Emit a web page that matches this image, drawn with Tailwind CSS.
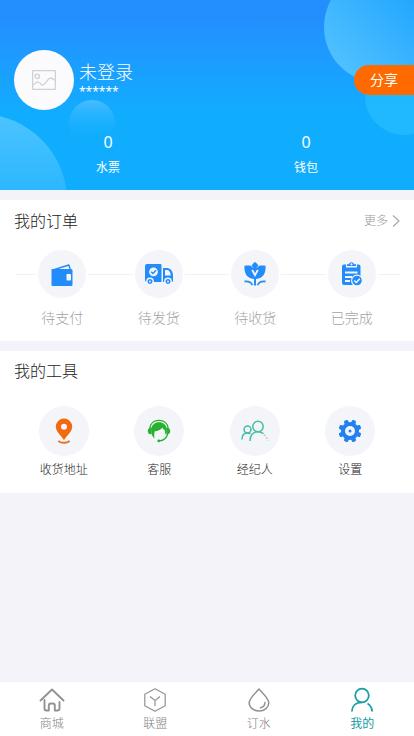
<!DOCTYPE html>
<html lang="zh-CN">
<head>
<meta charset="utf-8">
<meta name="viewport" content="width=device-width, initial-scale=1">
<title>我的</title>
<script src="https://cdn.jsdelivr.net/npm/@tailwindcss/browser@4"></script>
</head>
<body class="min-h-screen flex flex-col bg-[#f4f3fa] text-[#222] font-light font-['Noto_Sans','Noto_Sans_CJK_SC',sans-serif]">
<header class="relative overflow-hidden bg-linear-to-b from-[#238fff] from-10% to-[#10adff] to-60% text-white pt-[50px] pb-1.5">
  <svg class="absolute right-0 top-0" width="92" height="140" viewBox="0 0 92 140" aria-hidden="true">
    <defs>
      <linearGradient id="ga" x1="0" y1="1" x2="0.8" y2="0.2"><stop offset="0.1" stop-color="#54c3ff"/><stop offset="1" stop-color="#22a6ff"/></linearGradient>
    </defs>
    <circle cx="82" cy="96" r="39" fill="#25bcfe" fill-opacity=".75"/>
    <circle cx="58" cy="27" r="56" fill="url(#ga)"/>
  </svg>
  <svg class="absolute left-0 bottom-0" width="120" height="90" viewBox="0 0 120 90" aria-hidden="true">
    <defs>
      <linearGradient id="gb" x1="0" y1="0" x2="0" y2="1"><stop offset="0" stop-color="#48bdff"/><stop offset=".9" stop-color="#10adff" stop-opacity="0"/></linearGradient>
      <linearGradient id="gc" x1="0" y1="0" x2="0" y2="1"><stop offset="0" stop-color="#4cc4ff"/><stop offset=".5" stop-color="#27b5ff"/></linearGradient>
    </defs>
    <circle cx="-20" cy="101" r="87" fill="url(#gc)"/>
    <circle cx="92" cy="23" r="23" fill="url(#gb)"/>
  </svg>
  <div class="relative flex items-center pl-3.5">
    <div class="size-15 rounded-full bg-[#fbfbfe] flex items-center justify-center">
      <svg width="24" height="20" viewBox="0 0 24 20" fill="none" stroke="#d0d0d6" stroke-width="1.3" role="img" aria-label="头像"><rect x=".6" y=".6" width="22.8" height="18.8" rx="1"/><circle cx="5.300" cy="6.300" r="2.200"/><path d="M1 15l4-3 3 1 2 2.200 2-.7 5-6 2.500-.5 4 2.700"/></svg>
    </div>
    <div class="ml-[5px]">
      <h1 class="text-lg leading-6">未登录</h1>
      <p class="text-xs leading-4 font-normal">******</p>
    </div>
    <button type="button" class="ml-auto w-[60px] h-[30px] rounded-l-full bg-[#ff6a00] text-sm font-normal">分享</button>
  </div>
  <div class="relative grid grid-cols-2 px-[9px] pt-[22px] text-center font-normal">
    <a href="#"><span class="block text-base leading-5">0</span><span class="block text-xs leading-4 mt-2 pb-2">水票</span></a>
    <a href="#"><span class="block text-base leading-5">0</span><span class="block text-xs leading-4 mt-2 pb-2">钱包</span></a>
  </div>
</header>
<main class="grow">
  <section class="mt-2.5 bg-white px-3.5 pt-2.5 pb-[13px]">
    <div class="flex items-center justify-between h-[22px]">
      <h2 class="text-base">我的订单</h2>
      <a href="#" class="flex items-center gap-1 text-xs text-[#999]">更多
        <svg width="8" height="14" viewBox="0 0 8 14" fill="none" stroke="#aaa" stroke-width="1.2" aria-hidden="true"><path d="M1 1.500L7 7l-6 5.500"/></svg></a>
    </div>
    <div class="relative mt-[18px]">
      <div class="absolute left-0.5 right-0 top-6 h-px bg-[#f1f1f3]"></div>
      <ul class="relative grid grid-cols-4 text-center text-sm leading-5 text-[#a3a3a3]">
        <li><a href="#"><span class="mx-auto mb-2.5 size-12 rounded-full bg-[#f4f5f9] ring-2 ring-white flex items-center justify-center">
          <svg width="24" height="24" viewBox="0 0 24 24" fill="#228cfa" aria-hidden="true"><path d="M2 7.500L18.500 2.300a1 1 0 0 1 1.200.6L20.800 7h-1.400L18.300 4 7 7.500z"/><path d="M3 7h18a1.500 1.500 0 0 1 1.500 1.500V23a1 1 0 0 1-1 1H2.500a1 1 0 0 1-1-1V7z"/><rect x="16.500" y="12" width="4.500" height="6.500" rx=".8" fill="#f4f5f9"/></svg></span>待支付</a></li>
        <li><a href="#"><span class="mx-auto mb-2.5 size-12 rounded-full bg-[#f4f5f9] ring-2 ring-white flex items-center justify-center">
          <svg width="30" height="24" viewBox="0 0 30 24" aria-hidden="true"><path fill="#228cfa" d="M3 2h13.500a1 1 0 0 1 1 1v17H3a2 2 0 0 1-2-2V4a2 2 0 0 1 2-2zM19 6h4c4 0 6 4 6 8v5a1 1 0 0 1-1 1h-9z"/><path fill="#f4f5f9" d="M21 8h2c2.400 0 3.500 2.500 3.800 5.500H21z"/><circle cx="9.500" cy="9.800" r="4.400" fill="#f4f5f9"/><path d="M7.200 9.700l1.800 1.800 3-3.200" fill="none" stroke="#228cfa" stroke-width="1.500"/><g fill="#228cfa" stroke="#f4f5f9" stroke-width="1.400"><circle cx="6" cy="19.500" r="3.200"/><circle cx="24" cy="19.500" r="3.200"/></g><g fill="#f4f5f9"><circle cx="6" cy="19.500" r=".9"/><circle cx="24" cy="19.500" r=".9"/></g></svg></span>待发货</a></li>
        <li><a href="#"><span class="mx-auto mb-2.5 size-12 rounded-full bg-[#f4f5f9] ring-2 ring-white flex items-center justify-center">
          <svg width="24" height="26" viewBox="0 0 24 26" aria-hidden="true"><path fill="#228cfa" d="M12 1c1.500 1 2.800 2.400 3.400 4C17.500 4.600 20 4.400 22.500 4.800 23 11 21 17.500 13 18v6.500h-2V18C3 17.500 1 11 1.500 4.800 4 4.400 6.500 4.600 8.600 5 9.200 3.400 10.500 2 12 1z"/><path fill="none" stroke="#f4f5f9" stroke-width="1.800" d="M9.200 9l2.800 5.200L14.800 9"/><path fill="none" stroke="#f4f5f9" stroke-width=".8" d="M8.500 5L10 6.500M15.500 5L14 6.500"/><path fill="none" stroke="#228cfa" stroke-width="1.800" d="M1.500 20.500c3.500-.5 6.500.6 8 3.700M22.500 20.500c-3.500-.5-6.500.6-8 3.700"/></svg></span>待收货</a></li>
        <li><a href="#"><span class="mx-auto mb-2.5 size-12 rounded-full bg-[#f4f5f9] ring-2 ring-white flex items-center justify-center">
          <svg width="22" height="26" viewBox="0 0 22 26" aria-hidden="true"><path fill="#228cfa" d="M3 3.500h2V6.500h11V3.500h1.500a2 2 0 0 1 2 2V24H3a2 2 0 0 1-2-2V5.500a2 2 0 0 1 2-2z"/><path fill="#228cfa" fill-rule="evenodd" d="M6 5V3.300h1.800a2.800 2.800 0 0 1 5.400 0H15V5zM10.500 2.200a1.100 1.100 0 1 0 0 2.200 1.100 1.100 0 0 0 0-2.200z"/><path stroke="#f4f5f9" stroke-width="2" d="M4 11.500h12.500M4 16h7M4 20h5"/><circle cx="16" cy="19.500" r="5.400" fill="#228cfa" stroke="#f4f5f9" stroke-width="1.200"/><path fill="none" stroke="#f4f5f9" stroke-width="1.500" d="M13.200 19.500l2.100 2 3.500-3.800"/></svg></span>已完成</a></li>
      </ul>
    </div>
  </section>
  <section class="mt-2.5 bg-white px-3.5 pt-[9px] pb-[15px]">
    <h2 class="text-base leading-[22px]">我的工具</h2>
    <ul class="mt-6 mx-0.5 grid grid-cols-4 text-center text-xs leading-4">
      <li><a href="#"><span class="mx-auto mb-1.5 size-[50px] rounded-full bg-[#f4f5f9] flex items-center justify-center">
        <svg width="18" height="26" viewBox="0 0 18 26" aria-hidden="true"><path fill="#f26a0d" fill-rule="evenodd" d="M9 .5a8.200 8.200 0 0 1 8.200 8.200c0 4.300-4.500 8-8.200 13.300C5.300 16.700.8 13 .8 8.700A8.200 8.200 0 0 1 9 .5zm0 5.200a3 3 0 1 0 0 6 3 3 0 0 0 0-6z"/><path d="M3.500 22.800c1.500 2.600 9.500 2.600 11 0" fill="none" stroke="#e8702a" stroke-width="1.800"/></svg></span>收货地址</a></li>
      <li><a href="#"><span class="mx-auto mb-1.5 size-[50px] rounded-full bg-[#f4f5f9] flex items-center justify-center">
        <svg width="24" height="24" viewBox="0 0 24 24" aria-hidden="true"><path d="M2.800 9.500C3.200 4.300 7 1.400 12 1.400s8.800 2.900 9.200 8.100" fill="none" stroke="#27b12e" stroke-width="1.200"/><path fill="#27b12e" d="M4.200 10.500C4.300 6 8 3.300 12 3.300s7.700 2.700 7.800 7.200l-.7 5.500c-.8-1-1.300-3-1.300-5-1.200-.3-2-1.200-2.500-2.500-1.500 2.500-5 3.800-7.500 3.800-.6 1.500-.8 4-.3 7.200-2-1.500-3.300-4.500-3.300-9z"/><path fill="#27b12e" d="M4.600 8.700v6.600C2 15.700.8 14.200.8 12s1.200-3.700 3.800-3.300zM19.400 8.700v6.600c2.600.4 3.800-1.100 3.800-3.300s-1.200-3.700-3.800-3.300z"/><path d="M20.800 14.500c-1 4.400-3.800 7.100-8.500 7.400" fill="none" stroke="#27b12e" stroke-width="1.200"/><circle cx="11.800" cy="21.900" r="1.400" fill="#27b12e"/></svg></span>客服</a></li>
      <li><a href="#"><span class="mx-auto mb-1.5 size-[50px] rounded-full bg-[#f4f5f9] flex items-center justify-center">
        <svg width="28" height="22" viewBox="0 0 28 22" fill="none" stroke="#45bfa5" stroke-width="1.500" aria-hidden="true"><circle cx="17" cy="6.500" r="5.200"/><circle cx="6.500" cy="9.500" r="3.500"/><path d="M1 19.500c0-4 2-6.500 5.500-6.500 1.300 0 2.200.3 3 .8M9 21c0-5.500 3-9.300 8-9.300 2.300 0 4 .7 5.500 2"/><path stroke="#c3c9cf" stroke-dasharray="2 1.500" d="M23 14.500c2 1.800 3.200 4 3.500 6.500"/></svg></span>经纪人</a></li>
      <li><a href="#"><span class="mx-auto mb-1.5 size-[50px] rounded-full bg-[#f4f5f9] flex items-center justify-center">
        <svg width="24" height="24" viewBox="-12 -12 24 24" aria-hidden="true"><g fill="#2280f0"><circle r="9"/><g id="teeth" transform="rotate(22.500)"><rect x="-2.200" y="-11.500" width="4.400" height="23" rx="1.300"/><rect x="-11.500" y="-2.200" width="23" height="4.400" rx="1.300"/></g><use href="#teeth" transform="rotate(45)"/></g><circle r="5" fill="#f4f5f9"/><circle r="1.500" fill="#2280f0"/></svg></span>设置</a></li>
    </ul>
  </section>
</main>
<nav class="bg-white pt-[5px] pb-1">
  <ul class="grid grid-cols-4 text-center text-xs leading-4 text-[#808080]">
    <li><a href="#"><svg class="mx-auto mb-[3px]" width="26" height="26" viewBox="0 0 26 26" fill="none" stroke="#929292" stroke-width="1.900" stroke-linejoin="round" stroke-linecap="round" aria-hidden="true"><path d="M1.500 13.500L13 2.500l11.500 11M5.500 13v8.500a2 2 0 0 0 2 2h2.300v-5a2 2 0 0 1 2-2h2a2 2 0 0 1 2 2v5h2.700a2 2 0 0 0 2-2V15"/></svg>商城</a></li>
    <li><a href="#"><svg class="mx-auto mb-[3px]" width="26" height="26" viewBox="0 0 26 26" fill="none" stroke="#929292" stroke-width="1.200" aria-hidden="true"><path stroke-linejoin="round" d="M13 1.800l10.200 5.400v11.600L13 24.300 2.800 18.800V7.200z"/><path d="M8 9.500l5 4 5-4M13 13.500v5.500"/></svg>联盟</a></li>
    <li><a href="#"><svg class="mx-auto mb-[3px]" width="26" height="26" viewBox="0 0 26 26" fill="none" stroke="#929292" stroke-width="1.500" aria-hidden="true"><path stroke-linejoin="round" d="M13 2c4.500 5 9.800 9.500 9.800 13.800C22.800 20.500 18.500 24 13 24s-9.800-3.500-9.800-8.200C3.200 11.500 8.500 7 13 2z"/><path stroke-linecap="round" d="M19 15.500c-.2 2.800-1.800 4.700-4.500 5.300"/></svg>订水</a></li>
    <li><a href="#" aria-current="page" class="text-[#129aa0] font-normal"><svg class="mx-auto mb-[3px]" width="26" height="26" viewBox="0 0 26 26" fill="none" stroke="#18a0a4" stroke-width="1.800" aria-hidden="true"><circle cx="13" cy="8.500" r="6.800"/><path d="M2.800 24.500C3 19 6.800 15.300 13 15.300M18.500 16.500c2.700 1.500 4.300 4.300 4.700 8"/></svg>我的</a></li>
  </ul>
</nav>
</body>
</html>
